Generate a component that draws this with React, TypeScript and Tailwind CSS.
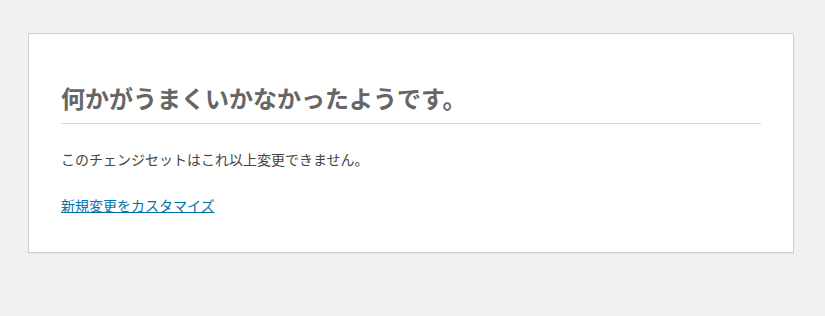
export default function App() {
  return (
    <div className="min-h-[316px] bg-[#f1f1f1] pt-[33px] font-['Noto_Sans_CJK_JP','Noto_Sans',sans-serif]">
      <div className="ml-[28px] w-[766px] border border-[#ccd0d4] bg-white px-8 py-4 text-[#444] shadow-[0_1px_1px_rgba(0,0,0,0.04)]">
        <h1 className="mt-[30px] border-b border-[#dadada] pb-[7px] text-[24px] font-bold leading-[36px] text-[#666]">
          何かがうまくいかなかったようです。
        </h1>
        <p className="mt-[25px] text-[14px] leading-[21px]">
          このチェンジセットはこれ以上変更できません。
        </p>
        <p className="mt-[25px] mb-[20px] text-[14px] leading-[21px]">
          <a href="#" className="text-[#0073aa] underline">
            新規変更をカスタマイズ
          </a>
        </p>
      </div>
    </div>
  );
}
